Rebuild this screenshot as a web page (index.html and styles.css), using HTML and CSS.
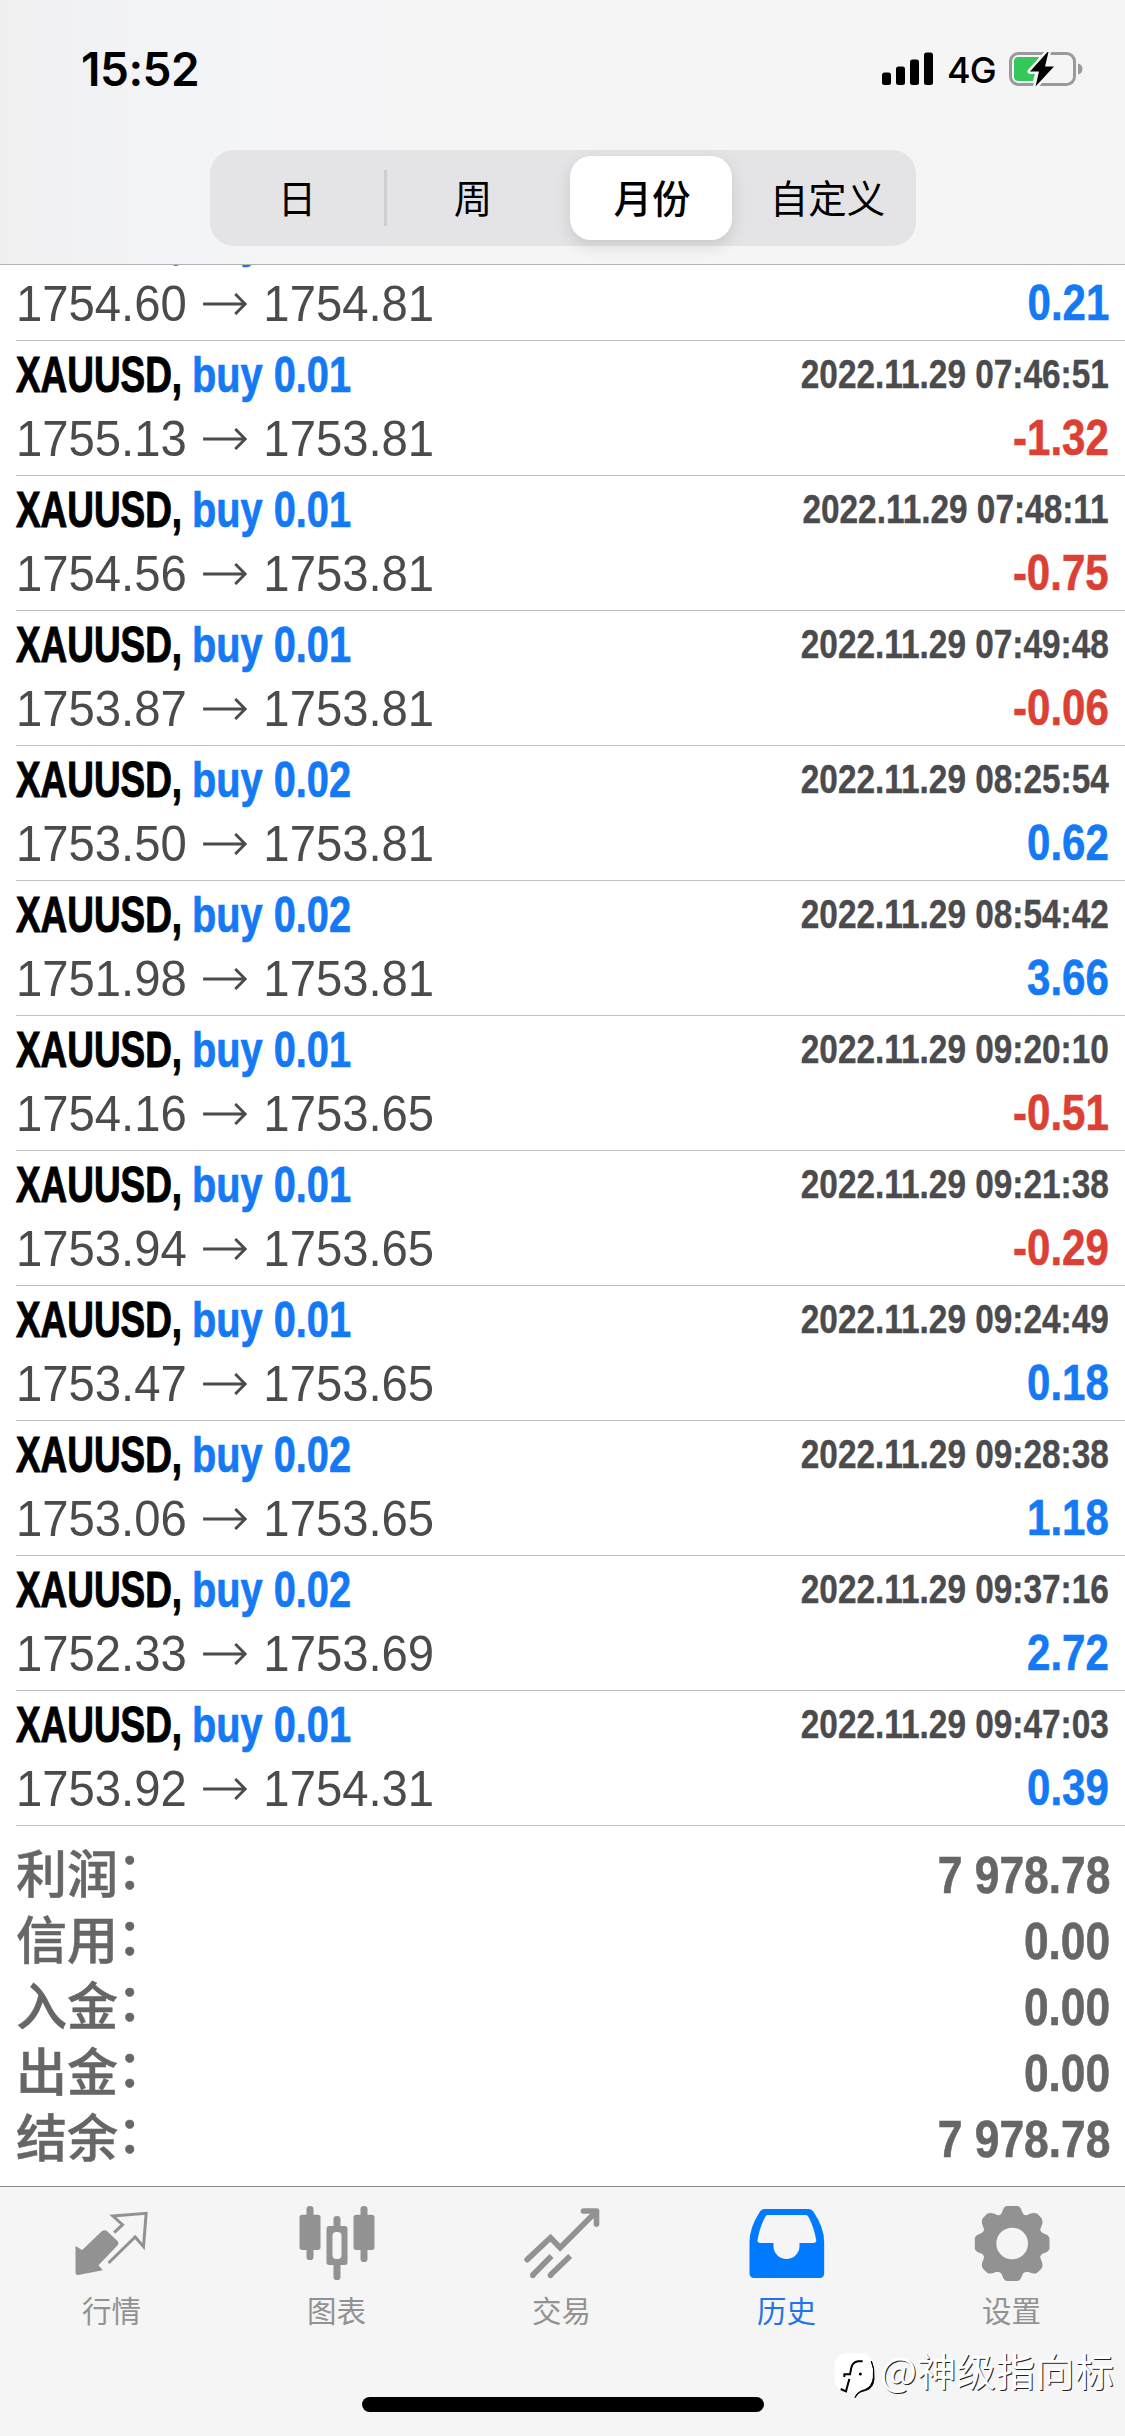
FILE: index.html
```html
<!DOCTYPE html>
<html lang="zh-CN">
<head>
<meta charset="utf-8">
<title>历史</title>
<link rel="stylesheet" href="styles.css">
</head>
<body>
<div class="app">
  <header class="header">
    <div class="status">
      <span class="time">15:52</span>
      <div class="status-right">
        <svg class="signal" width="51" height="33" viewBox="0 0 51 33"><rect x="0" y="20.5" width="9" height="12.5" rx="2.5"/><rect x="14" y="14.5" width="9" height="18.5" rx="2.5"/><rect x="28" y="7.5" width="9" height="25.5" rx="2.5"/><rect x="42" y="0.5" width="9" height="32.5" rx="2.5"/></svg>
        <span class="net">4G</span>
        <svg class="battery" width="74" height="36" viewBox="0 0 74 36">
          <rect x="1.5" y="2.5" width="64" height="31" rx="8" fill="none" stroke="#9a9a9c" stroke-width="3"/>
          <path d="M69 12.5c3 .8 4.500 3 4.500 5.500s-1.500 4.700-4.500 5.500z" fill="#9a9a9c"/>
          <path d="M9.500 6H30L24 30H9.500Q5 30 5 25.500V10.500Q5 6 9.500 6Z" fill="#34c759"/>
          <path d="M38.500 1L21 20.500H30L26.500 35.500L45 15.500H36L39.500 1Z" fill="#000" stroke="#f5f5f6" stroke-width="5" stroke-linejoin="round" paint-order="stroke"/>
        </svg>
      </div>
    </div>
    <div class="segments">
      <span class="seg">日</span>
      <span class="seg divided">周</span>
      <span class="seg active">月份</span>
      <span class="seg last">自定义</span>
    </div>
  </header>

  <main class="history">
    <div class="deal"><div class="left"><div class="title"><span class="sym">XAUUSD,</span><span class="side">buy 0.01</span></div><div class="price">1754.60<svg class="arrow" viewBox="0 0 46 22"><path d="M0 11H44M34 1L44.500 11L34 21"/></svg>1754.81</div></div><div class="right"><div class="date"></div><div class="profit">0.21</div></div></div>
    <div class="deal"><div class="left"><div class="title"><span class="sym">XAUUSD,</span><span class="side">buy 0.01</span></div><div class="price">1755.13<svg class="arrow" viewBox="0 0 46 22"><path d="M0 11H44M34 1L44.500 11L34 21"/></svg>1753.81</div></div><div class="right"><div class="date">2022.11.29 07:46:51</div><div class="profit loss">-1.32</div></div></div>
    <div class="deal"><div class="left"><div class="title"><span class="sym">XAUUSD,</span><span class="side">buy 0.01</span></div><div class="price">1754.56<svg class="arrow" viewBox="0 0 46 22"><path d="M0 11H44M34 1L44.500 11L34 21"/></svg>1753.81</div></div><div class="right"><div class="date">2022.11.29 07:48:11</div><div class="profit loss">-0.75</div></div></div>
    <div class="deal"><div class="left"><div class="title"><span class="sym">XAUUSD,</span><span class="side">buy 0.01</span></div><div class="price">1753.87<svg class="arrow" viewBox="0 0 46 22"><path d="M0 11H44M34 1L44.500 11L34 21"/></svg>1753.81</div></div><div class="right"><div class="date">2022.11.29 07:49:48</div><div class="profit loss">-0.06</div></div></div>
    <div class="deal"><div class="left"><div class="title"><span class="sym">XAUUSD,</span><span class="side">buy 0.02</span></div><div class="price">1753.50<svg class="arrow" viewBox="0 0 46 22"><path d="M0 11H44M34 1L44.500 11L34 21"/></svg>1753.81</div></div><div class="right"><div class="date">2022.11.29 08:25:54</div><div class="profit">0.62</div></div></div>
    <div class="deal"><div class="left"><div class="title"><span class="sym">XAUUSD,</span><span class="side">buy 0.02</span></div><div class="price">1751.98<svg class="arrow" viewBox="0 0 46 22"><path d="M0 11H44M34 1L44.500 11L34 21"/></svg>1753.81</div></div><div class="right"><div class="date">2022.11.29 08:54:42</div><div class="profit">3.66</div></div></div>
    <div class="deal"><div class="left"><div class="title"><span class="sym">XAUUSD,</span><span class="side">buy 0.01</span></div><div class="price">1754.16<svg class="arrow" viewBox="0 0 46 22"><path d="M0 11H44M34 1L44.500 11L34 21"/></svg>1753.65</div></div><div class="right"><div class="date">2022.11.29 09:20:10</div><div class="profit loss">-0.51</div></div></div>
    <div class="deal"><div class="left"><div class="title"><span class="sym">XAUUSD,</span><span class="side">buy 0.01</span></div><div class="price">1753.94<svg class="arrow" viewBox="0 0 46 22"><path d="M0 11H44M34 1L44.500 11L34 21"/></svg>1753.65</div></div><div class="right"><div class="date">2022.11.29 09:21:38</div><div class="profit loss">-0.29</div></div></div>
    <div class="deal"><div class="left"><div class="title"><span class="sym">XAUUSD,</span><span class="side">buy 0.01</span></div><div class="price">1753.47<svg class="arrow" viewBox="0 0 46 22"><path d="M0 11H44M34 1L44.500 11L34 21"/></svg>1753.65</div></div><div class="right"><div class="date">2022.11.29 09:24:49</div><div class="profit">0.18</div></div></div>
    <div class="deal"><div class="left"><div class="title"><span class="sym">XAUUSD,</span><span class="side">buy 0.02</span></div><div class="price">1753.06<svg class="arrow" viewBox="0 0 46 22"><path d="M0 11H44M34 1L44.500 11L34 21"/></svg>1753.65</div></div><div class="right"><div class="date">2022.11.29 09:28:38</div><div class="profit">1.18</div></div></div>
    <div class="deal"><div class="left"><div class="title"><span class="sym">XAUUSD,</span><span class="side">buy 0.02</span></div><div class="price">1752.33<svg class="arrow" viewBox="0 0 46 22"><path d="M0 11H44M34 1L44.500 11L34 21"/></svg>1753.69</div></div><div class="right"><div class="date">2022.11.29 09:37:16</div><div class="profit">2.72</div></div></div>
    <div class="deal"><div class="left"><div class="title"><span class="sym">XAUUSD,</span><span class="side">buy 0.01</span></div><div class="price">1753.92<svg class="arrow" viewBox="0 0 46 22"><path d="M0 11H44M34 1L44.500 11L34 21"/></svg>1754.31</div></div><div class="right"><div class="date">2022.11.29 09:47:03</div><div class="profit">0.39</div></div></div>
    <div class="summary">
      <div class="sum"><span>利润<i>：</i></span><b>7 978.78</b></div>
      <div class="sum"><span>信用<i>：</i></span><b>0.00</b></div>
      <div class="sum"><span>入金<i>：</i></span><b>0.00</b></div>
      <div class="sum"><span>出金<i>：</i></span><b>0.00</b></div>
      <div class="sum"><span>结余<i>：</i></span><b>7 978.78</b></div>
    </div>
  </main>

  <footer class="tabs">
    <nav class="tabrow">
      <div class="tab">
        <svg viewBox="82.5 60 270 270"><path fill="#929292" d="M105 198L125 210L184 154Q192 147 200 154L231 183Q237 190 230 197L174 256L187 271L113 285Q105 286 105 276Z"/><path fill="none" stroke="#929292" stroke-width="9" d="M221 158L246 134L217 108L317 100L309 200L284 171L204 249"/></svg>
        <span>行情</span>
      </div>
      <div class="tab">
        <svg viewBox="757.5 60 270 270"><g fill="#929292"><rect x="798" y="78" width="21" height="162" rx="10"/><rect x="777" y="104" width="63" height="106" rx="8"/><rect x="960" y="78" width="21" height="168" rx="10"/><rect x="939" y="104" width="63" height="106" rx="8"/><rect x="879" y="108" width="21" height="192" rx="10"/><rect x="858" y="138" width="63" height="117" rx="8"/></g><rect x="876" y="156" width="27" height="81" rx="11" fill="#f5f5f5"/></svg>
        <span>图表</span>
      </div>
      <div class="tab">
        <svg viewBox="112.5 60 270 270"><g fill="none" stroke="#929292" stroke-width="17"><path stroke-linecap="round" d="M140 239L210 173L239 203L343 99"/><path stroke-linecap="round" stroke-linejoin="round" d="M309 93H348V132"/><path d="M213 228L157 285M269 228L210 285"/></g><g fill="#929292"><circle cx="157" cy="286" r="8.500"/><circle cx="210" cy="286" r="8.500"/></g></svg>
        <span>交易</span>
      </div>
      <div class="tab on">
        <svg viewBox="787.5 60 270 270"><path fill="#007aff" fill-rule="evenodd" d="M852 87H984Q994 87 999 95Q1031 143 1031 185V280Q1031 294 1017 294H821Q807 294 807 280V185Q807 143 838 95Q843 87 852 87ZM862 105Q857 105 854 111Q838 140 831 180Q830 189 839 189H879V198A39 39 0 0 0 957 198V189H998Q1009 189 1007 180Q1000 140 984 111Q981 105 976 105Z"/></svg>
        <span>历史</span>
      </div>
      <div class="tab">
        <svg viewBox="502.5 60 270 270"><path fill="#929292" fill-rule="evenodd" d="M620 78H650Q657 78 660 84L668 102Q676 110 686 102Q702 96 710 101L722 113Q728 120 725 132L719 149Q721 158 731 161Q743 164 747 174V206Q743 216 731 219Q721 222 719 232L725 248Q728 260 722 267L710 278Q702 284 686 277Q676 272 668 280L660 297Q657 303 650 303H620Q613 303 610 297L602 280Q594 272 584 277Q568 284 560 278L548 267Q542 260 545 248L551 232Q549 222 539 219Q527 216 523 206V174Q527 164 539 161Q549 158 551 149L545 132Q542 120 548 113L560 101Q568 96 584 102Q594 110 602 102L610 84Q613 78 620 78ZM635 143A47.500 47.500 0 1 0 635 238A47.500 47.500 0 1 0 635 143Z"/></svg>
        <span>设置</span>
      </div>
    </nav>
    <div class="home"></div>
    <div class="watermark">
      <svg width="42" height="48" viewBox="0 0 126 144"><rect x="2" y="6" width="114" height="116" rx="36" fill="#fff"/><path d="M112 30Q122 52 118 80Q114 108 92 116Q68 122 63 140L72 128Q78 122 96 118Q118 112 120 84Q122 52 112 30Z" stroke="#000" stroke-width="3"/><g fill="none" stroke="#000" stroke-width="6"><path d="M86 31H72Q56 34 52 50L48 70H31V78M46 84L36 121L20 114"/></g><circle cx="79" cy="69" r="4.500"/></svg>
      <span>@神级指向标</span>
    </div>
  </footer>
</div>
</body>
</html>
```
FILE: styles.css
```css
* { box-sizing: border-box; }
body {
  margin: 0;
  background: #fff;
  font-family: "Liberation Sans", "Noto Sans CJK SC", sans-serif;
}
.app {
  width: 1125px;
  height: 2436px;
  display: flex;
  flex-direction: column;
  overflow: hidden;
}

/* Header */
.header {
  height: 265px;
  flex: none;
  background: linear-gradient(90deg, #f0f0f1 0, #f3f4f7 180px, #f5f5f6 400px);
  border-bottom: 1px solid #b2b2b2;
}
.status {
  height: 150px;
  padding: 52px 42px 0 81px;
  display: flex;
  justify-content: space-between;
  align-items: flex-start;
}
.time {
  font: 600 46px/34px Inter, sans-serif;
  letter-spacing: -0.5px;
}
.status-right { display: flex; align-items: flex-start; }
.net {
  font: 500 36px/37px Inter, sans-serif;
  width: 61px;
  padding-left: 14px;
  letter-spacing: -1px;
}
.battery { margin-left: 15px; margin-top: -1px; }

.segments {
  width: 706px;
  height: 96px;
  margin-left: 210px;
  padding: 6px 0;
  display: grid;
  grid-template-columns: 174px 186px 162px 1fr;
  border-radius: 24px;
  background: #e4e4e6;
}
.seg {
  display: flex;
  align-items: center;
  justify-content: center;
  padding-bottom: 4px;
  font: 400 38.5px/58px "Noto Sans CJK SC", sans-serif;
}
.divided {
  padding-right: 8px;
  background: linear-gradient(#cfcfd2, #cfcfd2) 0 14px / 3px 56px no-repeat;
}
.active {
  padding-left: 2px;
  border-radius: 21px;
  background: #fff;
  box-shadow: 0 6px 16px rgba(0, 0, 0, .12);
  font-weight: 500;
}
.last { padding-left: 7px; }

/* Deals */
.history {
  height: 1921px;
  flex: none;
  overflow: hidden;
}
.deal {
  height: 135px;
  margin-left: 16px;
  padding-right: 16px;
  border-bottom: 1px solid #c0c0c4;
  display: flex;
  justify-content: space-between;
}
.deal:first-child { margin-top: -59px; }
.title, .price, .date, .profit { white-space: nowrap; }
.title {
  display: flex;
  height: 65px;
  padding-top: 9px;
  font-weight: 700;
  font-size: 50px;
  line-height: 50px;
}
.sym {
  width: 176px;
  -webkit-text-stroke: 1px #000;
  transform: scaleX(.738);
  transform-origin: 0 0;
}
.side {
  color: #1479f5;
  -webkit-text-stroke: .7px #1479f5;
  transform: scaleX(.795);
  transform-origin: 0 0;
}
.price {
  display: flex;
  align-items: center;
  height: 65px;
  font-size: 50px;
  line-height: 50px;
  color: #4b4b4e;
  transform: scaleX(.945);
  transform-origin: 0 0;
}
.arrow {
  width: 48px;
  height: 22px;
  margin: 0 17px 0 16px;
  fill: none;
  stroke: #4b4b4e;
  stroke-width: 3;
}
.right { text-align: right; font-weight: 700; }
.date {
  height: 65px;
  padding-top: 10px;
  font-size: 40.5px;
  line-height: 46px;
  color: #4b4b4e;
  -webkit-text-stroke: .4px #4b4b4e;
  transform: scaleX(.824);
  transform-origin: 100% 0;
}
.profit {
  height: 64px;
  font-size: 50px;
  line-height: 65px;
  color: #1479f5;
  -webkit-text-stroke: .6px;
  transform: scaleX(.84);
  transform-origin: 100% 0;
}
.loss { color: #dc4034; }

/* Totals */
.summary { padding: 16px 15px 0 16px; }
.sum {
  height: 66px;
  display: flex;
  justify-content: space-between;
  color: #666;
}
.sum span {
  margin-top: -4px;
  font: 500 51px/66px "Noto Sans CJK SC", sans-serif;
  -webkit-text-stroke: .5px #666;
}
.sum i {
  display: inline-block;
  font-style: normal;
  transform: translate(-1px, -4px);
}
.sum b {
  font-size: 52px;
  line-height: 66px;
  -webkit-text-stroke: .6px #666;
  transform: scaleX(.853);
  transform-origin: 100% 0;
}

/* Tab bar */
.tabs {
  position: relative;
  height: 250px;
  flex: none;
  background: #f5f5f5;
  border-top: 1px solid #8c8c8c;
}
.tabrow {
  display: grid;
  grid-template-columns: repeat(5, 1fr);
  height: 210px;
  padding-top: 13px;
}
.tab {
  display: flex;
  flex-direction: column;
  align-items: center;
  color: #929292;
}
.tab svg { width: 90px; height: 90px; }
.tab span {
  font: 400 29.5px/39px "Noto Sans CJK SC", sans-serif;
  margin-right: 2px;
}
.on { color: #2272ea; }
.home {
  width: 402px;
  height: 15px;
  margin: 0 auto;
  border-radius: 8px;
  background: #000;
}
.watermark {
  position: absolute;
  left: 834px;
  top: 164px;
  display: flex;
  align-items: flex-start;
}
.watermark span {
  margin: -5px 0 0 4px;
  font: 400 39px/46px "Noto Sans CJK SC", sans-serif;
  letter-spacing: .4px;
  color: #fff;
  text-shadow: 1px 1px 0 #222;
}
```
